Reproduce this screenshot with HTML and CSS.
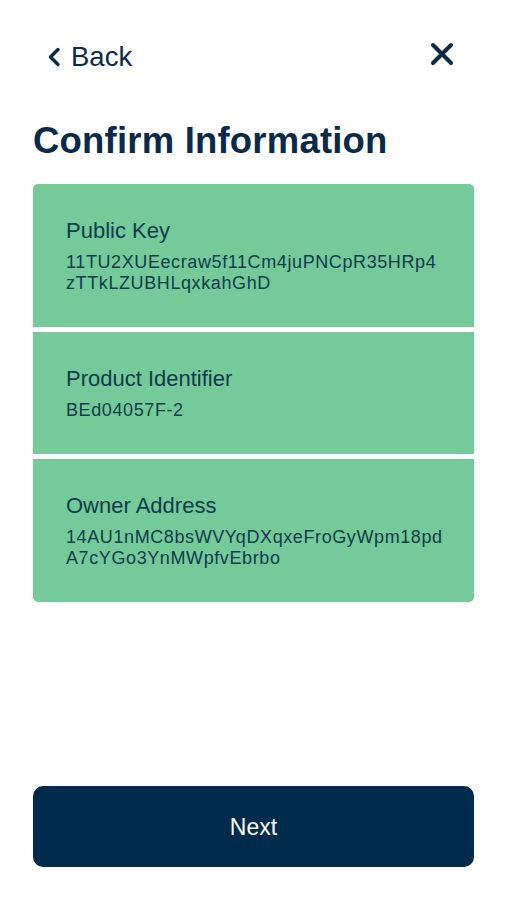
FILE: index.html
```html
<!DOCTYPE html>
<html lang="en">
<head>
<meta charset="utf-8">
<title>Confirm Information</title>
<link rel="stylesheet" href="styles.css">
</head>
<body>
<div class="screen">
  <header class="topbar">
    <a class="back">
      <svg class="chev" width="14" height="20" viewBox="0 0 14 20"><path d="M11 2.5 L3.5 10 L11 17.5" fill="none" stroke="#0b2a4a" stroke-width="3.4" stroke-linecap="round" stroke-linejoin="round"/></svg>
      <span>Back</span>
    </a>
    <svg class="close" width="24" height="24" viewBox="0 0 24 24"><path d="M3 3 L21 21 M21 3 L3 21" fill="none" stroke="#0b2a4a" stroke-width="4" stroke-linecap="round"/></svg>
  </header>
  <h1 class="title">Confirm Information</h1>
  <div class="cards">
    <div class="card">
      <div class="label">Public Key</div>
      <div class="value">11TU2XUEecraw5f11Cm4juPNCpR35HRp4<br>zTTkLZUBHLqxkahGhD</div>
    </div>
    <div class="card">
      <div class="label">Product Identifier</div>
      <div class="value">BEd04057F-2</div>
    </div>
    <div class="card">
      <div class="label">Owner Address</div>
      <div class="value">14AU1nMC8bsWVYqDXqxeFroGyWpm18pd<br>A7cYGo3YnMWpfvEbrbo</div>
    </div>
  </div>
  <button class="next">Next</button>
</div>
</body>
</html>
```
FILE: styles.css
```css
* { box-sizing: border-box; }
html, body { margin: 0; padding: 0; background: #ffffff; }
body { font-family: "Liberation Sans", Arial, sans-serif; }
.screen {
  width: 507px;
  height: 900px;
  padding: 42px 33px 33px 33px;
  display: flex;
  flex-direction: column;
}
.topbar {
  display: flex;
  justify-content: space-between;
  align-items: center;
  height: 30px;
  padding: 0 20px 0 14px;
}
.back {
  display: flex;
  align-items: center;
  gap: 10px;
  color: #0b2a4a;
  font-size: 27.5px;
  line-height: 30px;
}
.chev { display: block; }
.close { display: block; margin-bottom: 6px; }
.title {
  margin: 47px 0 0 0;
  font-size: 36.5px;
  line-height: 44px;
  font-weight: 700;
  letter-spacing: 0.2px;
  color: #0b2a4a;
}
.cards {
  margin-top: 21px;
  display: flex;
  flex-direction: column;
  gap: 5px;
}
.card {
  background: #74ca98;
  padding: 34px 33px 33px 33px;
  color: #0f3b4c;
}
.card:first-child { border-radius: 5px 5px 0 0; }
.card:last-child { border-radius: 0 0 5px 5px; }
.label {
  font-size: 22px;
  line-height: 26px;
}
.value {
  margin-top: 8px;
  font-size: 18px;
  line-height: 21px;
  letter-spacing: 0.6px;
}
.next {
  margin-top: auto;
  height: 81px;
  width: 100%;
  border: none;
  border-radius: 10px;
  background: #012b4c;
  color: #ffffff;
  font-family: "Liberation Sans", Arial, sans-serif;
  font-size: 23px;
  font-weight: 400;
  padding-top: 2px;
}
```
